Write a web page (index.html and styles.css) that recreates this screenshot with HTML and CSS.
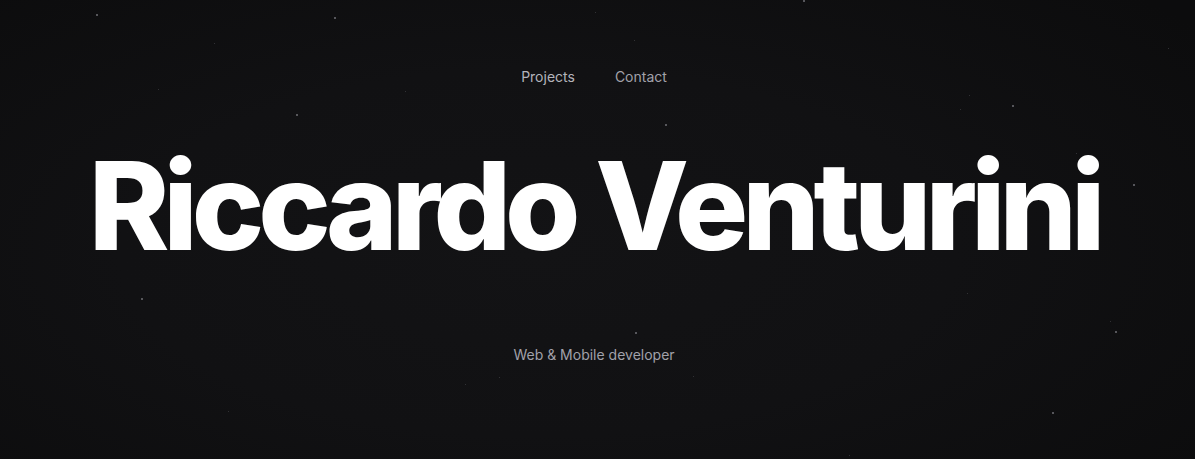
FILE: index.html
```html
<!DOCTYPE html>
<html lang="en">
<head>
<meta charset="utf-8">
<title>Riccardo Venturini</title>
<link rel="stylesheet" href="styles.css">
</head>
<body>
<div class="stars" aria-hidden="true">
  <span class="star" style="left:96px;top:14px"></span>
  <span class="star dim" style="left:214px;top:43px"></span>
  <span class="star" style="left:334px;top:17px"></span>
  <span class="star dim" style="left:158px;top:89px"></span>
  <span class="star" style="left:296px;top:114px"></span>
  <span class="star dim" style="left:405px;top:91px"></span>
  <span class="star dim" style="left:595px;top:12px"></span>
  <span class="star dim" style="left:634px;top:40px"></span>
  <span class="star" style="left:665px;top:124px"></span>
  <span class="star" style="left:803px;top:0px"></span>
  <span class="star dim" style="left:969px;top:95px"></span>
  <span class="star" style="left:1012px;top:105px"></span>
  <span class="star dim" style="left:960px;top:109px"></span>
  <span class="star dim" style="left:1076px;top:153px"></span>
  <span class="star" style="left:1133px;top:184px"></span>
  <span class="star" style="left:141px;top:298px"></span>
  <span class="star dim" style="left:228px;top:411px"></span>
  <span class="star dim" style="left:499px;top:377px"></span>
  <span class="star dim" style="left:465px;top:384px"></span>
  <span class="star" style="left:635px;top:332px"></span>
  <span class="star dim" style="left:693px;top:376px"></span>
  <span class="star dim" style="left:1110px;top:321px"></span>
  <span class="star" style="left:1115px;top:331px"></span>
  <span class="star" style="left:1052px;top:412px"></span>
  <span class="star dim" style="left:967px;top:293px"></span>
  <span class="star dim" style="left:849px;top:455px"></span>
  <span class="star dim" style="left:1168px;top:48px"></span>
</div>
<main class="hero">
  <nav class="nav">
    <a href="#projects">Projects</a>
    <a href="#contact">Contact</a>
  </nav>
  <h1 class="title">Riccardo Venturini</h1>
  <p class="subtitle">Web &amp; Mobile developer</p>
</main>
</body>
</html>
```

FILE: styles.css
```css
* { box-sizing: border-box; }
html, body { height: 100%; }
body {
  margin: 0;
  overflow: hidden;
  font-family: Inter, "Noto Sans", sans-serif;
  background: radial-gradient(ellipse 70% 80% at 45% 55%, #131315 0%, #111113 50%, #0c0c0d 100%);
  color: #fff;
  position: relative;
}
.stars {
  position: absolute;
  inset: 0;
  pointer-events: none;
}
.star {
  position: absolute;
  width: 2px;
  height: 2px;
  border-radius: 50%;
  background: #6f6f74;
}
.star.dim { background: #3c3c40; width: 1px; height: 1px; }
.hero {
  position: relative;
  display: flex;
  flex-direction: column;
  align-items: center;
  padding-top: 67px;
  padding-right: 7px;
}
.nav {
  display: flex;
  gap: 40px;
  height: 20px;
  line-height: 20px;
  font-size: 14px;
}
.nav a {
  color: #a1a1aa;
  text-decoration: none;
}
.nav a:first-child { color: #b4b4bb; }
.title {
  margin: 55px 0 0;
  font-size: 122px;
  line-height: 128px;
  font-weight: 800;
  letter-spacing: -0.05em;
  white-space: nowrap;
}
.subtitle {
  margin: 75px 0 0;
  font-size: 14px;
  line-height: 20px;
  color: #a1a1aa;
}
```
